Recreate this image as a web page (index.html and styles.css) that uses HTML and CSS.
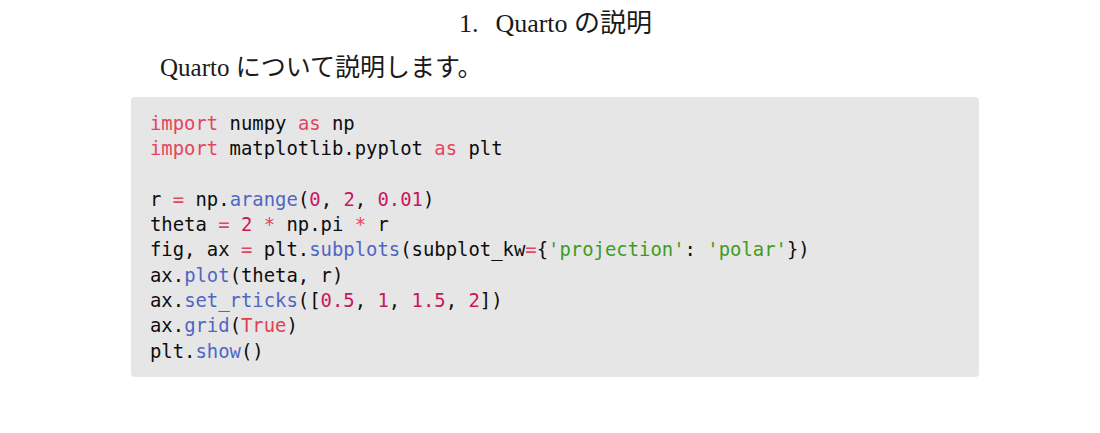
FILE: index.html
```html
<!DOCTYPE html>
<html lang="ja">
<head>
<meta charset="utf-8">
<title>Quarto の説明</title>
<link rel="stylesheet" href="styles.css">
</head>
<body>
<main class="page">
  <h1 class="title"><span class="num">1.</span>Quarto の説明</h1>
  <p class="lead">Quarto について説明します。</p>
  <pre class="code"><code><span class="kw">import</span> numpy <span class="kw">as</span> np
<span class="kw">import</span> matplotlib.pyplot <span class="kw">as</span> plt

r <span class="op">=</span> np.<span class="fn">arange</span>(<span class="nu">0</span>, <span class="nu">2</span>, <span class="nu">0.01</span>)
theta <span class="op">=</span> <span class="nu">2</span> <span class="op">*</span> np.pi <span class="op">*</span> r
fig, ax <span class="op">=</span> plt.<span class="fn">subplots</span>(subplot_kw<span class="op">=</span>{<span class="st">'projection'</span>: <span class="st">'polar'</span>})
ax.<span class="fn">plot</span>(theta, r)
ax.<span class="fn">set_rticks</span>([<span class="nu">0.5</span>, <span class="nu">1</span>, <span class="nu">1.5</span>, <span class="nu">2</span>])
ax.<span class="fn">grid</span>(<span class="cn">True</span>)
plt.<span class="fn">show</span>()</code></pre>
</main>
</body>
</html>
```
FILE: styles.css
```css
html, body {
  margin: 0;
  padding: 0;
  background: #ffffff;
}

body {
  font-family: "Liberation Serif", "Noto Sans CJK JP", serif;
  color: #1a1a1a;
}

.page {
  width: 848px;
  margin: 0 0 0 131px;
  padding-top: 6px;
}

.title {
  margin: 0;
  font-size: 26px;
  font-weight: normal;
  text-align: center;
  line-height: 36px;
  padding-left: 1px;
}

.title .num {
  margin-right: 17px;
}

.lead {
  margin: 8px 0 0 29px;
  font-size: 25px;
  line-height: 36px;
}

.code {
  margin: 11px 0 0 0;
  background: #e6e6e6;
  border-radius: 4px;
  padding: 14px 19px 13px 19px;
  font-family: "DejaVu Sans Mono", monospace;
  font-size: 18.9px;
  line-height: 25.3px;
  color: #0d0d0d;
  white-space: pre;
}

.code code {
  font-family: inherit;
}

.kw { color: #e3455e; }
.op { color: #e3455e; }
.fn { color: #4f66c4; }
.nu { color: #c8175d; }
.st { color: #3f9b1f; }
.cn { color: #e0404f; }
```
